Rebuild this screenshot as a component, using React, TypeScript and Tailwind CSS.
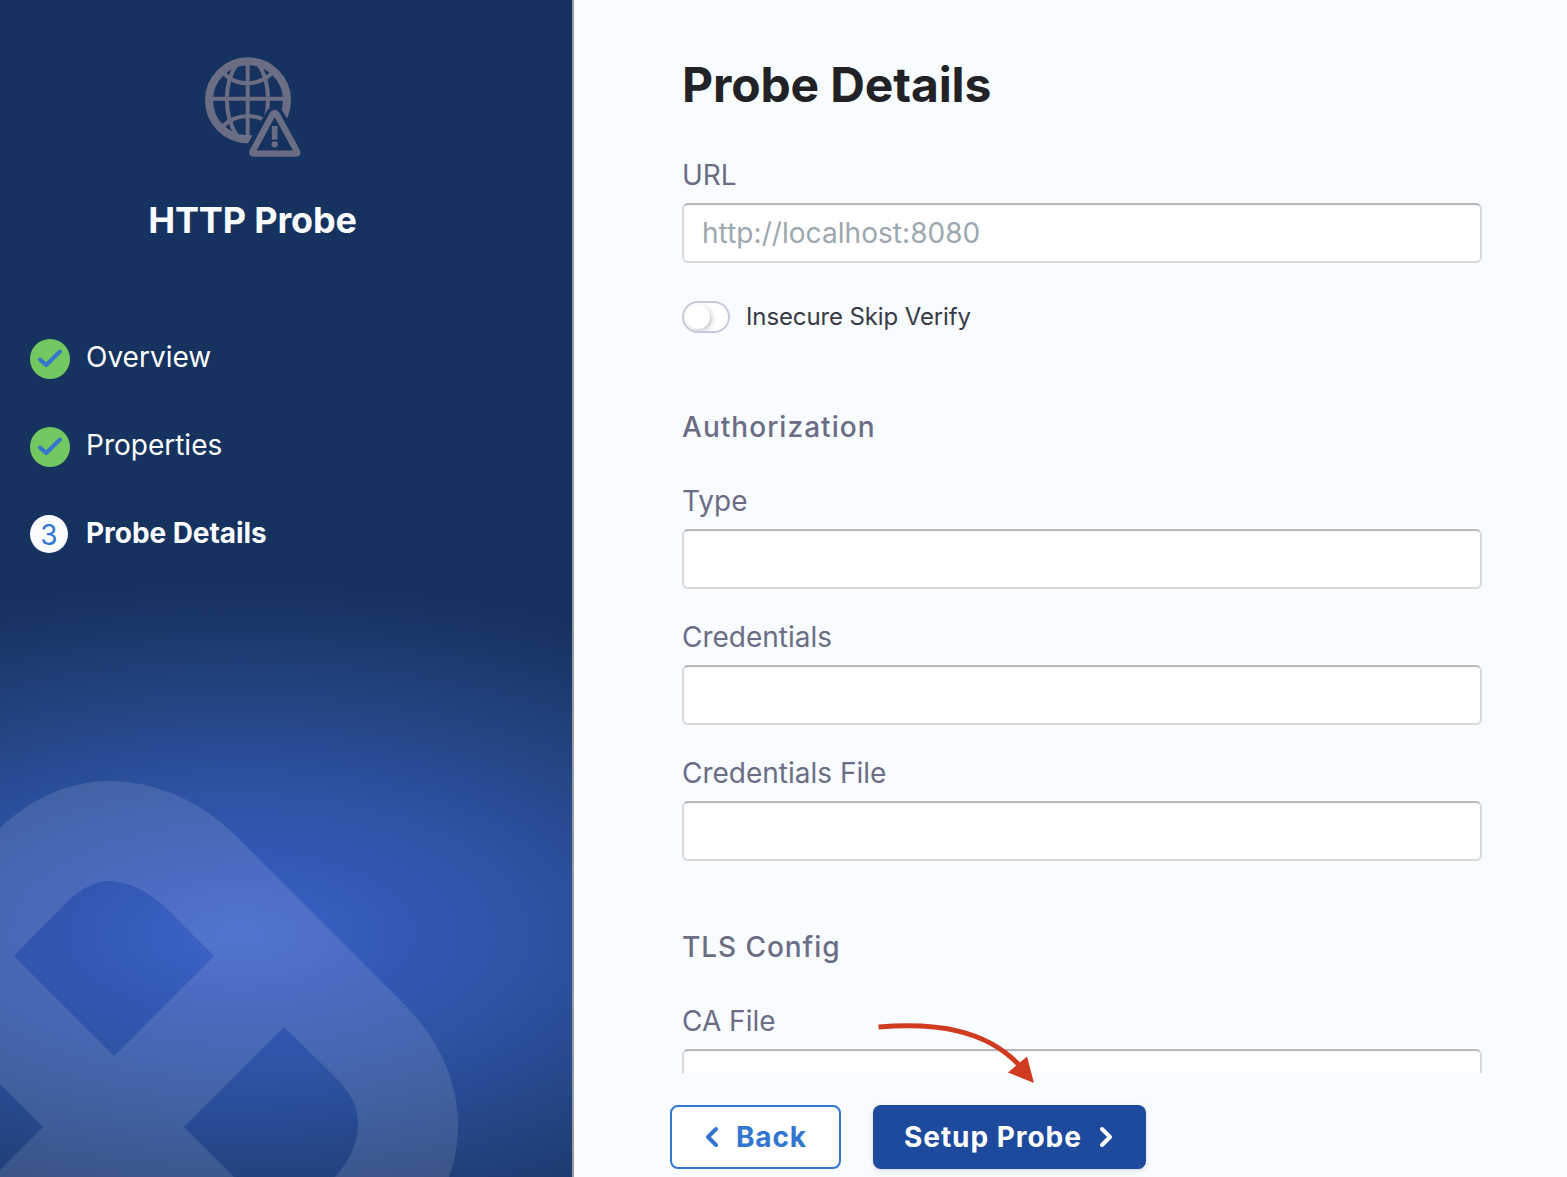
import React from "react";

function ProbeIcon() {
  return (
    <svg className="h-[125px] w-[125px]" viewBox="0 0 375 375" fill="none" stroke="#6b6d85">
      <mask id="globe-cut" maskUnits="userSpaceOnUse" x="0" y="0" width="375" height="375">
        <rect width="375" height="375" fill="white" stroke="none" />
        <path d="M254 213 L190 323 H319 Z" fill="black" stroke="black" strokeWidth="56" strokeLinejoin="round" />
      </mask>
      <g mask="url(#globe-cut)">
        <circle cx="174" cy="166" r="117" strokeWidth="24" />
        <path d="M173 50V282M57 161H291" strokeWidth="12" />
        <path d="M142 56C100 112 100 212 142 274M204 56C244 112 244 212 204 274" strokeWidth="12" />
        <path d="M100 84C140 125 205 125 246 84M100 242C125 219 150 213 174 213C190 213 203 216 222 224" strokeWidth="12" />
      </g>
      <path d="M247 209 Q254 198 261 209 L321 319 Q324 326 316 326 H193 Q184 326 188 319 Z" strokeWidth="19" strokeLinejoin="round" />
      <path d="M254 243V284" strokeWidth="17" />
      <circle cx="254" cy="298" r="9.5" fill="#6b6d85" stroke="none" />
    </svg>
  );
}

function Watermark() {
  return (
    <svg className="absolute bottom-0 left-0 h-[597px] w-[572px]" viewBox="0 580 572 597">
      <path
        fill="#ffffff"
        fillOpacity="0.113"
        fillRule="evenodd"
        d="M0 828C33 797 70 781 110 781C153 781 197 799 233 833L405 1005C439 1039 458 1082 458 1124C458 1143 455 1161 449 1177H335C350 1161 358 1142 358 1124C358 1106 350 1092 335 1077L284 1027L184 1127L234 1177H0V1170L43 1127L0 1084ZM14 956L114 1056L214 956L163 905C146 890 126 881 110 881C95 881 80 889 67 902Z"
      />
    </svg>
  );
}

function Step({ label, number, last }: { label: string; number: number; last?: boolean }) {
  return (
    <li className="flex h-10 items-center text-[28px] text-white">
      <div className="w-14">
        {last ? (
          <div className="mt-[2px] flex size-[38px] items-center justify-center rounded-full bg-[#fafcff] pt-[2px] text-[28px] leading-none text-[#3276d0]">
            {number}
          </div>
        ) : (
          <div className="mt-1 flex size-10 items-center justify-center rounded-full bg-[#73c761]">
            <svg className="size-10" viewBox="0 0 40 40" fill="none" stroke="#3276d0" strokeWidth="4" strokeLinecap="round" strokeLinejoin="round">
              <path d="M10 20.5L16.2 26L30 12.5" />
            </svg>
          </div>
        )}
      </div>
      <span className={last ? "font-bold tracking-[-0.05px] text-[#fafcff]" : ""}>{label}</span>
    </li>
  );
}

function Field({ label, placeholder }: { label: string; placeholder?: string }) {
  return (
    <label className="block h-[136px] text-[28px] leading-[34px] text-[#6b6d85]">
      {label}
      <input
        placeholder={placeholder}
        className="mt-[11px] block h-[60px] w-[800px] rounded-md border-2 border-[#d9dadb] border-t-[#b5b7b9] bg-white px-[18px] text-[28px] tracking-[0.05px] text-[#22222a] shadow-[inset_0_1px_2px_#0000000d] outline-none placeholder:text-[#9da7b0]"
      />
    </label>
  );
}

export default function App() {
  return (
    <div className="flex h-[1177px] w-[1567px] overflow-hidden bg-[#fafcff] font-['Inter',sans-serif]">
      <aside className="relative w-[574px] shrink-0 border-r-2 border-[#999b9c] bg-[#16325f] bg-[radial-gradient(720px_348px_at_241px_934px,#3c64c8_0%,#3358b5_23%,#2e54a5_38%,#294e98_50%,#23437f_70%,#1b396c_86%,#16325f_100%)]">
        <Watermark />
        <div className="relative">
          <div className="ml-[190px] pt-[45px]">
            <ProbeIcon />
          </div>
          <h2 className="mt-[27px] w-[505px] text-center text-[36px] leading-[46px] font-bold tracking-[-0.15px] text-[#fafcff]">HTTP Probe</h2>
          <ol className="mt-[94px] flex flex-col gap-12 pl-[30px]">
            <Step number={1} label="Overview" />
            <Step number={2} label="Properties" />
            <Step number={3} label="Probe Details" last />
          </ol>
        </div>
      </aside>
      <main className="relative flex-1 bg-[#f8fcff]">
        <div className="h-[1073px] overflow-hidden pl-[108px]">
          <h1 className="pt-[55px] text-[48px] leading-[60px] font-bold tracking-[-0.14px] text-[#222226]">Probe Details</h1>
          <div className="mt-[43px]">
            <Field label="URL" placeholder="http://localhost:8080" />
          </div>
          <div className="mt-[7px] flex h-8 items-center gap-4">
            <div className="flex h-8 w-12 items-center overflow-hidden rounded-full border-2 border-[#c7c8dc] bg-white pl-[2px]">
              <div className="size-6 rounded-full bg-white shadow-[2px_2px_5px_#00000038]" />
            </div>
            <span className="text-[24px] tracking-[-0.12px] text-[#383946]">Insecure Skip Verify</span>
          </div>
          <h3 className="mt-[77px] text-[28px] leading-[34px] font-medium tracking-[1.03px] text-[#6b6d85]">Authorization</h3>
          <div className="mt-10">
            <Field label="Type" />
            <Field label="Credentials" />
            <Field label="Credentials File" />
          </div>
          <h3 className="mt-[38px] text-[28px] leading-[34px] font-medium tracking-[0.95px] text-[#6b6d85]">TLS Config</h3>
          <div className="mt-10">
            <Field label="CA File" />
          </div>
        </div>
        <div className="flex gap-8 pt-8 pl-24 text-[28px] font-bold tracking-[0.8px]">
          <button className="flex h-16 w-[171px] items-center rounded-lg border-2 border-[#3276d0] bg-white pl-[33px] text-[#3276d0]">
            <svg className="mr-[17px] h-[22px] w-[14px]" viewBox="0 0 14 22" fill="none" stroke="currentColor" strokeWidth="4" strokeLinecap="round" strokeLinejoin="round">
              <path d="M11 3L3 11L11 19" />
            </svg>
            Back
          </button>
          <button className="flex h-16 w-[273px] items-center rounded-lg bg-[#1e4a9e] pl-[31px] tracking-[0.95px] text-white shadow-[0_2px_6px_#2829471a,0_1px_2px_#2829471a]">
            Setup Probe
            <svg className="ml-[17px] h-[22px] w-[14px]" viewBox="0 0 14 22" fill="none" stroke="currentColor" strokeWidth="4" strokeLinecap="round" strokeLinejoin="round">
              <path d="M3 3L11 11L3 19" />
            </svg>
          </button>
        </div>
        <svg className="pointer-events-none absolute top-[1000px] left-[286px] h-[100px] w-[200px]" viewBox="860 1000 200 100">
          <path d="M878.5 1027C938 1022.5 987 1030 1020 1066" fill="none" stroke="#d13b20" strokeWidth="5" />
          <path d="M1027 1056.5L1034 1083L1008 1072.5Z" fill="#d13b20" />
        </svg>
      </main>
    </div>
  );
}
